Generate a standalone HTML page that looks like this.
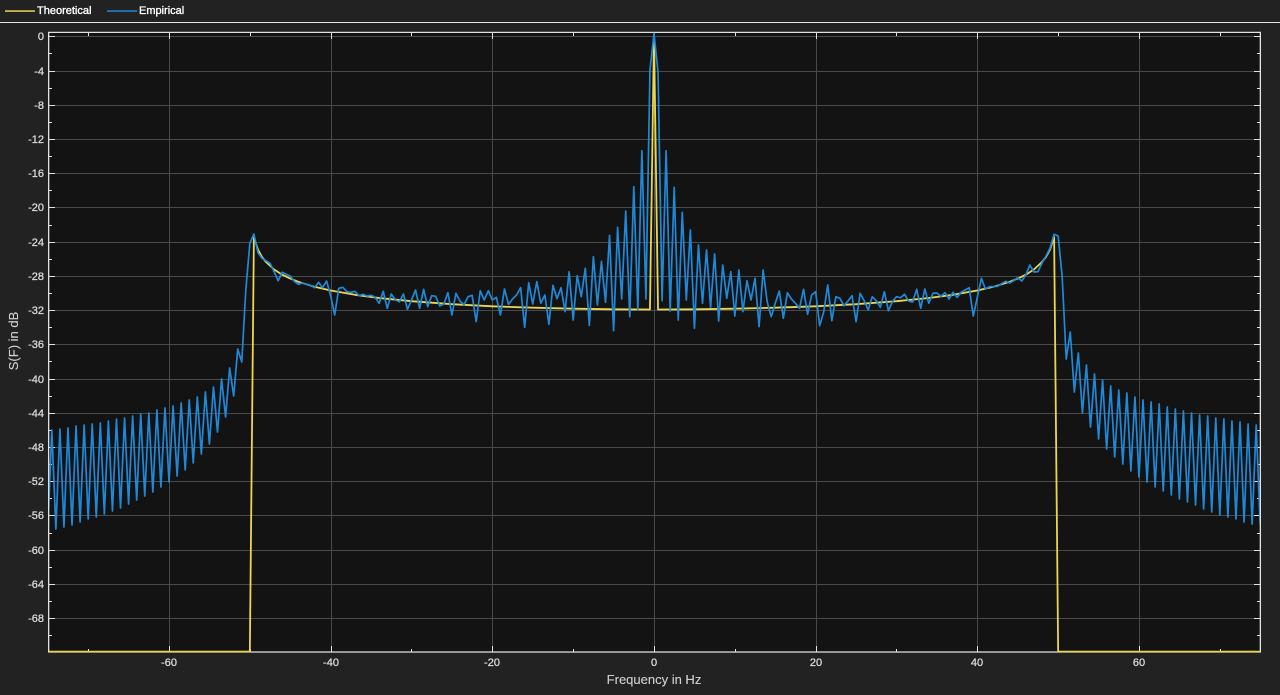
<!DOCTYPE html>
<html>
<head>
<meta charset="utf-8">
<title>Spectrum</title>
<style>
html,body{margin:0;padding:0;background:#222;width:1280px;height:695px;overflow:hidden}
svg{display:block}
text{font-family:"Liberation Sans",Arial,sans-serif}
.t{font-size:11px;fill:#d8d8d8;stroke:#d8d8d8;stroke-width:.3px}
.lg{font-size:11px;fill:#fff;stroke:#fff;stroke-width:.35px}
.al{font-size:13px;fill:#d0d0d0;stroke:#d0d0d0;stroke-width:.12px}
</style>
</head>
<body>
<svg width="1280" height="695" viewBox="0 0 1280 695" xmlns="http://www.w3.org/2000/svg">
<rect width="1280" height="695" fill="#222"/>
<rect x="0" y="22" width="1280" height="1" fill="#e4e4e4"/>
<rect x="5" y="10.3" width="30" height="1.5" fill="#ecd650"/>
<rect x="107" y="10.3" width="30" height="1.5" fill="#2088d8"/>
<text class="lg" x="37" y="14">Theoretical</text>
<text class="lg" x="139" y="14">Empirical</text>

<rect x="48" y="32" width="1212" height="620" fill="#131313"/>
<g stroke="#4a4a4a" stroke-width="1" fill="none" shape-rendering="crispEdges">
<path d="M49 36.5H1260M49 71.5H1260M49 105.5H1260M49 139.5H1260M49 173.5H1260M49 207.5H1260M49 242.5H1260M49 276.5H1260M49 310.5H1260M49 344.5H1260M49 379.5H1260M49 413.5H1260M49 447.5H1260M49 481.5H1260M49 515.5H1260M49 550.5H1260M49 584.5H1260M49 618.5H1260"/>
<path d="M169.5 33V652M331.5 33V652M492.5 33V652M654.5 33V652M816.5 33V652M977.5 33V652M1139.5 33V652"/>
</g>
<g stroke="#e2e2e2" stroke-width="1" fill="none" shape-rendering="crispEdges">
<path d="M49 36.5h6M49 71.5h6M49 105.5h6M49 139.5h6M49 173.5h6M49 207.5h6M49 242.5h6M49 276.5h6M49 310.5h6M49 344.5h6M49 379.5h6M49 413.5h6M49 447.5h6M49 481.5h6M49 515.5h6M49 550.5h6M49 584.5h6M49 618.5h6"/>
<path d="M49 53.5h3M49 88.5h3M49 122.5h3M49 156.5h3M49 190.5h3M49 225.5h3M49 259.5h3M49 293.5h3M49 327.5h3M49 361.5h3M49 396.5h3M49 430.5h3M49 464.5h3M49 498.5h3M49 533.5h3M49 567.5h3M49 601.5h3M49 635.5h3"/>
<path d="M1260 36.5h-6M1260 71.5h-6M1260 105.5h-6M1260 139.5h-6M1260 173.5h-6M1260 207.5h-6M1260 242.5h-6M1260 276.5h-6M1260 310.5h-6M1260 344.5h-6M1260 379.5h-6M1260 413.5h-6M1260 447.5h-6M1260 481.5h-6M1260 515.5h-6M1260 550.5h-6M1260 584.5h-6M1260 618.5h-6"/>
<path d="M1260 53.5h-3M1260 88.5h-3M1260 122.5h-3M1260 156.5h-3M1260 190.5h-3M1260 225.5h-3M1260 259.5h-3M1260 293.5h-3M1260 327.5h-3M1260 361.5h-3M1260 396.5h-3M1260 430.5h-3M1260 464.5h-3M1260 498.5h-3M1260 533.5h-3M1260 567.5h-3M1260 601.5h-3M1260 635.5h-3"/>
<path d="M169.5 33v6M331.5 33v6M492.5 33v6M654.5 33v6M816.5 33v6M977.5 33v6M1139.5 33v6M88.5 33v3M250.5 33v3M411.5 33v3M573.5 33v3M735.5 33v3M896.5 33v3M1058.5 33v3M1220.5 33v3"/>
<path d="M169.5 652v-6M331.5 652v-6M492.5 652v-6M654.5 652v-6M816.5 652v-6M977.5 652v-6M1139.5 652v-6M88.5 652v-3M250.5 652v-3M411.5 652v-3M573.5 652v-3M735.5 652v-3M896.5 652v-3M1058.5 652v-3M1220.5 652v-3"/>
</g>
<path d="M48.6 32.4H1260.4V652H48.6Z" fill="none" stroke="#e2e2e2" stroke-width="1.2"/>

<g transform="translate(654 0) scale(4.0415 1)" fill="none" stroke-linejoin="round">
<polyline vector-effect="non-scaling-stroke" stroke="#ecd650" stroke-width="1.8" points="-150,651.6 -100,651.6 -99,237 -98,249.5 -97,257 -96,262 -94,269.5 -92,274.7 -90,278.6 -88,281.8 -84,286.8 -80,290.5 -74,294.8 -68,298 -60,301.2 -50,304.2 -40,306.3 -30,307.7 -20,308.7 -10,309.3 -1,309.5 0,36 1,309.5 10,309.3 20,308.7 30,307.7 40,306.3 50,304.2 60,301.2 68,298 74,294.8 80,290.5 84,286.8 88,281.8 90,278.6 92,274.7 94,269.5 96,262 97,257 98,249.5 99,237 100,651.6 150,651.6"/>
<polyline vector-effect="non-scaling-stroke" stroke="#2088d8" stroke-width="1.7" points="-150,531 -149,430 -148,529 -147,429 -146,527 -145,428 -144,525 -143,426 -142,522 -141,425 -140,519 -139,424 -138,517 -137,423 -136,514 -135,421 -134,511 -133,419 -132,508 -131,418 -130,504 -129,416 -128,500 -127,414 -126,496 -125,413 -124,492 -123,410 -122,487 -121,408 -120,482 -119,406 -118,476 -117,403 -116,470 -115,400 -114,463 -113,397 -112,454 -111,392 -110,444 -109,387 -108,432 -107,379 -106,417 -105,368 -104,396 -103,349 -102,362 -101,290 -100,243.3 -99,234 -98,252.7 -97,258.3 -96,260.7 -95,263.3 -94,271.7 -93,280.7 -92,272.3 -91,274.3 -90,276 -89,281.3 -88,284.3 -87,283 -86,284.3 -85,285.3 -84,287.7 -83,282.3 -82,287.7 -81,281 -80,296 -79,315 -78,288.3 -77,287.3 -76,291.7 -75,292.3 -74,291.3 -73,295.7 -72,294.3 -71,296 -70,295.3 -69,297.3 -68,303.3 -67,291.3 -66,308.3 -65,294 -64,300 -63,301.7 -62,294 -61,309.3 -60,300 -59,290 -58,308.3 -57,289.3 -56,306.7 -55,295.7 -54,296.3 -53,306 -52,304 -51,292.7 -50,315 -49,293.3 -48,301 -47,304.7 -46,296.7 -45,295.3 -44,321.7 -43,290.7 -42,300 -41,290.7 -40,300 -39,297.3 -38,315 -37,289 -36,304.3 -35,299 -34,295 -33,287.7 -32,327.3 -31,282.7 -30,304 -29,281.7 -28,303.3 -27,295 -26,324.3 -25,285.3 -24,298.7 -23,287.7 -22,311.7 -21,271.7 -20,320 -19,275.7 -18,296.7 -17,268.3 -16,325.3 -15,256.7 -14,305 -13,261.3 -12,302.3 -11,235.3 -10,330.7 -9,227.3 -8,299 -7,211 -6,316.7 -5,186.7 -4,310 -3,150.7 -2,299 -1,70 0,33.5 1,72 2,300.7 3,150.7 4,311 5,187.3 6,320 7,212.3 8,300 9,230 10,328.3 11,245 12,303.3 13,250 14,307.3 15,254 16,321 17,265 18,298.3 19,271.7 20,316 21,270 22,311.7 23,280.7 24,300 25,278.3 26,326.7 27,270 28,301.7 29,316.7 30,303.3 31,291 32,318.3 33,292.7 34,299 35,303.3 36,308.3 37,289.3 38,314.3 39,295 40,291.7 41,325.7 42,311.7 43,285 44,320.7 45,296.7 46,298.3 47,305.7 48,301 49,295.7 50,321.7 51,293.3 52,300.7 53,310 54,296.7 55,300.7 56,307.3 57,291.7 58,310.7 59,301.7 60,296.7 61,297.7 62,294.3 63,301 64,302 65,289.3 66,308.3 67,289 68,303.3 69,293.3 70,293 71,296.3 72,292.7 73,299 74,292.3 75,297.3 76,292.3 77,290 78,287.7 79,316 80,297.3 81,278.3 82,289 83,286.7 84,286.7 85,286.3 86,283.7 87,281.3 88,283 89,280.7 90,277.7 91,281 92,275 93,265 94,272 95,271.7 96,263 97,256 98,248 99,234.3 100,236 101,277 102,359 103,332 104,392 105,353 106,413 107,365 108,427 109,374 110,439 111,380 112,449 113,386 114,457 115,390 116,464 117,393 118,471 119,397 120,477 121,400 122,482 123,402 124,487 125,404 126,491 127,407 128,495 129,409 130,499 131,411 132,502 133,413 134,505 135,415 136,509 137,416 138,512 139,418 140,515 141,419 142,517 143,421 144,519 145,422 146,522 147,424 148,524 149,425 150,525"/>
</g>
<rect x="1261" y="23" width="19" height="672" fill="#222"/>
<rect x="0" y="23" width="48" height="672" fill="#222"/>
<path d="M48.6 32.4V652" fill="none" stroke="#e2e2e2" stroke-width="1.2"/>
<path d="M1260.4 32.4V652" fill="none" stroke="#e2e2e2" stroke-width="1.2"/>

<g text-anchor="end">
<text class="t" x="44" y="40">0</text>
<text class="t" x="44" y="75">-4</text>
<text class="t" x="44" y="109">-8</text>
<text class="t" x="44" y="143">-12</text>
<text class="t" x="44" y="177">-16</text>
<text class="t" x="44" y="211">-20</text>
<text class="t" x="44" y="246">-24</text>
<text class="t" x="44" y="280">-28</text>
<text class="t" x="44" y="314">-32</text>
<text class="t" x="44" y="348">-36</text>
<text class="t" x="44" y="383">-40</text>
<text class="t" x="44" y="417">-44</text>
<text class="t" x="44" y="451">-48</text>
<text class="t" x="44" y="485">-52</text>
<text class="t" x="44" y="519">-56</text>
<text class="t" x="44" y="554">-60</text>
<text class="t" x="44" y="588">-64</text>
<text class="t" x="44" y="622">-68</text>
</g>
<g text-anchor="middle">
<text class="t" x="169" y="666">-60</text>
<text class="t" x="331" y="666">-40</text>
<text class="t" x="492" y="666">-20</text>
<text class="t" x="654" y="666">0</text>
<text class="t" x="816" y="666">20</text>
<text class="t" x="977" y="666">40</text>
<text class="t" x="1139" y="666">60</text>
</g>
<text class="al" x="654" y="684" text-anchor="middle">Frequency in Hz</text>
<text class="al" transform="translate(18 341) rotate(-90)" text-anchor="middle">S(F) in dB</text>
</svg>
</body>
</html>
